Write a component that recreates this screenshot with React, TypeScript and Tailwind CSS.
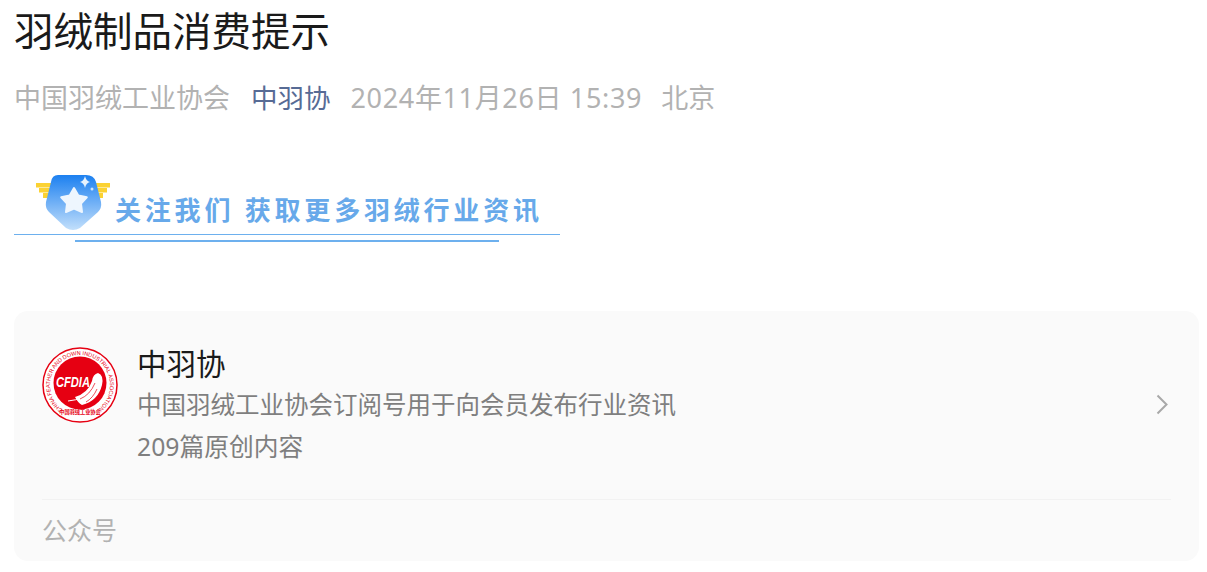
export default function App() {
  const f = { fontFamily: '"Noto Sans","Noto Sans CJK SC",sans-serif' };
  return (
    <div className="w-[1207px] h-[572px] bg-white overflow-hidden pl-[14px] pr-[8px]" style={f}>
      <h1 className="text-[39.5px] leading-[46px] pt-[8px] h-[54px] text-[#1a1a1a] font-normal whitespace-nowrap">羽绒制品消费提示</h1>
      <div className="flex text-[27px] leading-[36px] mt-[26px] text-[#b2b2b2] whitespace-nowrap">
        <span>中国羽绒工业协会</span>
        <span className="ml-[21px] text-[#576b95] text-[26.5px]">中羽协</span>
        <span className="ml-[20px] tracking-[0.65px]">2024年11月26日 15:39</span>
        <span className="ml-[19px]">北京</span>
      </div>
      <div className="relative mt-[59px] w-[546px] h-[60px] border-b border-[#6db0ee]">
        <svg className="absolute left-[20px] top-0" width="80" height="60" viewBox="0 0 80 60">
          <defs>
            <linearGradient id="sh" x1="0" y1="0" x2="0" y2="1">
              <stop offset="0" stopColor="#1c80f0" />
              <stop offset="1" stopColor="#c2dffb" />
            </linearGradient>
          </defs>
          <path d="M2 8h18v4.5H2ZM5 13h15v4.5H5ZM9 18h11v5H9Z" fill="#fbd233" />
          <path d="M76 8H58v4.5h18ZM73 13H58v4.5h15ZM69 18H58v5h11Z" fill="#fbd233" />
          <path d="M24 0h28q8 0 10 7l5 20q1 6-3 10L46 53q-7 4-14 0L15 37q-4-4-3-10l5-20q1-7 7-7Z" fill="url(#sh)" />
          <path d="M40 13l4.3 7.5 8.5 1.7-5.8 6.3 1 8.5-8-3.5-8 3.5 1-8.5-5.8-6.3 8.5-1.7Z" fill="#eef6fe" stroke="#eef6fe" strokeWidth="2" strokeLinejoin="round" />
          <path d="M51 1q1 5 5 6-4 1-5 6-1-5-5-6 4-1 5-6Z" fill="#e6f2fd" />
          <circle cx="58" cy="14" r="1.5" fill="#cfe5fb" />
        </svg>
        <span className="absolute left-[101px] top-[17px] text-[26px] leading-[36px] font-bold tracking-[3.8px] text-[#67a9ea] whitespace-nowrap">关注我们 获取更多羽绒行业资讯</span>
        <div className="absolute left-[61px] top-[65px] w-[424px] h-[2px] bg-[#6db0ee]" />
      </div>
      <div className="mt-[76px] h-[250px] bg-[#fafafa] rounded-[14px] px-[28px] flex flex-col">
        <div className="flex items-center h-[189px] border-b border-[#f2f2f2]">
          <svg width="76" height="76" viewBox="0 0 76 76" className="shrink-0 mb-[40px]">
            <circle cx="38" cy="38" r="37" fill="#fff" stroke="#e60012" strokeWidth="1.5" />
            <defs>
              <path id="ring" d="M20.8 62.6A30 30 0 1 1 55.2 62.6" />
            </defs>
            <text fontSize="5.6" fill="#e60012" fontFamily="Liberation Sans">
              <textPath href="#ring" textLength="150" lengthAdjust="spacing">CHINA FEATHER AND DOWN INDUSTRIAL ASSOCIATION</textPath>
            </text>
            <circle cx="38" cy="36" r="26.5" fill="#e60012" />
            <path d="M33 50Q46 46 50 34Q51 27 56 26Q62 28 60 38Q56 54 40 58Q36 56 33 50Z" fill="#fff" />
            <path d="M26 54Q42 53 52 40" fill="none" stroke="#fff" strokeWidth="1" />
            <path d="M38 52Q48 48 53 36M44 55Q51 51 55 42" fill="none" stroke="#e60012" strokeWidth="0.7" />
            <text x="14" y="40" fontSize="15" fontWeight="bold" fontStyle="italic" fill="#fff" fontFamily="Liberation Sans" textLength="34" lengthAdjust="spacingAndGlyphs">CFDIA</text>
            <text x="38" y="66.5" textAnchor="middle" fontSize="5.2" fontWeight="bold" fill="#e60012" style={{ fontFamily: '"Noto Sans CJK SC",sans-serif' }}>中国羽绒工业协会</text>
          </svg>
          <div className="ml-[19px] flex-1 min-w-0 mt-[1px]">
            <div className="text-[29.5px] leading-[40px] text-[#1a1a1a]">中羽协</div>
            <div className="text-[24.5px] leading-[42px] text-[#7f7f7f]">中国羽绒工业协会订阅号用于向会员发布行业资讯</div>
            <div className="text-[24.75px] leading-[42px] text-[#7f7f7f]">209篇原创内容</div>
          </div>
          <svg width="12" height="21" viewBox="0 0 12 21" className="shrink-0 mr-[3px] mb-[2px]">
            <path d="M1.5 1.5 10.5 10.5 1.5 19.5" fill="none" stroke="#a8a8a8" strokeWidth="2" />
          </svg>
        </div>
        <div className="text-[25px] leading-[60px] text-[#b2b2b2]">公众号</div>
      </div>
    </div>
  );
}
